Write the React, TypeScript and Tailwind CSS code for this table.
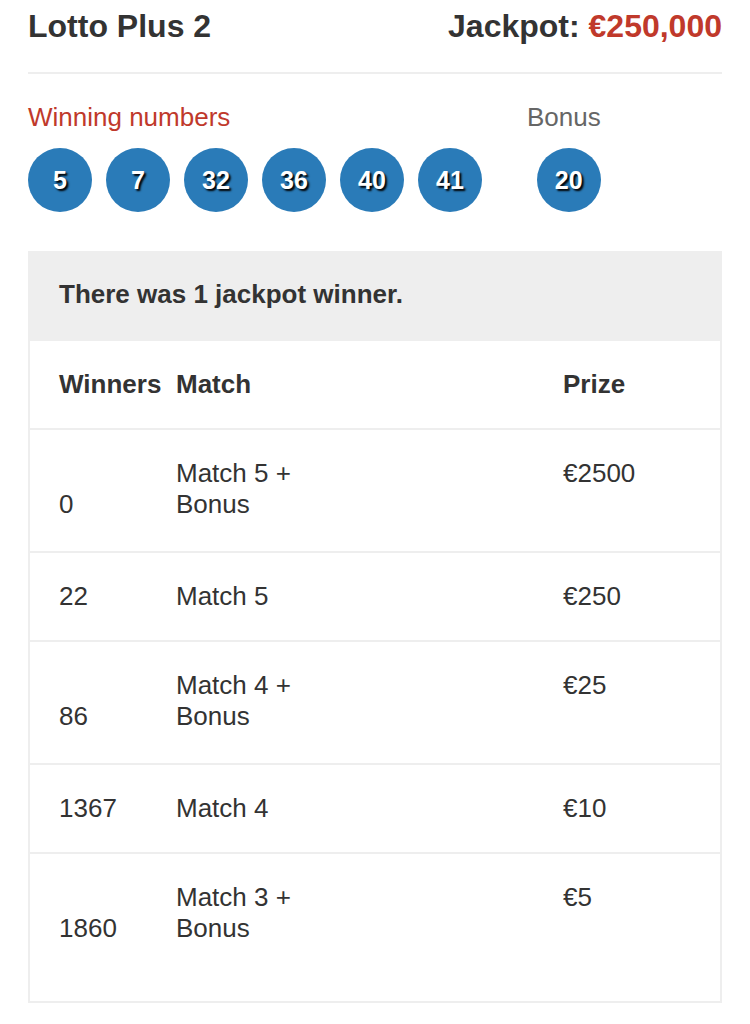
import React from 'react';

interface PrizeRow {
  winners: string;
  match: string[];
  prize: string;
}

const numbers = [5, 7, 32, 36, 40, 41];
const bonus = 20;

const rows: PrizeRow[] = [
  { winners: '0', match: ['Match 5 +', 'Bonus'], prize: '€2500' },
  { winners: '22', match: ['Match 5'], prize: '€250' },
  { winners: '86', match: ['Match 4 +', 'Bonus'], prize: '€25' },
  { winners: '1367', match: ['Match 4'], prize: '€10' },
  { winners: '1860', match: ['Match 3 +', 'Bonus'], prize: '€5' },
];

const Ball: React.FC<{ n: number }> = ({ n }) => (
  <div className="w-16 h-16 rounded-full bg-[#2a7bb8] flex items-center justify-center">
    <span className="text-white font-bold text-[25px] leading-none [text-shadow:2px_2px_2px_#000]">{n}</span>
  </div>
);

const App: React.FC = () => {
  return (
    <div className="bg-white min-h-[1024px] px-[28px] font-['Liberation_Sans',Arial,sans-serif] text-[#333]">
      {/* Header */}
      <div className="flex items-baseline justify-between pt-[6px] text-[32px] leading-10 font-bold">
        <h1>Lotto Plus 2</h1>
        <p>
          Jackpot: <span className="text-[#c0392b]">€250,000</span>
        </p>
      </div>
      <div className="mt-[26px] h-[2px] bg-[#eeeeee]" />

      {/* Draw numbers */}
      <div className="flex gap-[45px] pt-[28px] text-[26px] leading-[31px]">
        <div className="flex flex-col">
          <p className="text-[#c0392b]">Winning numbers</p>
          <div className="flex gap-[14px] mt-[15px]">
            {numbers.map((n) => (
              <Ball key={n} n={n} />
            ))}
          </div>
        </div>
        <div className="flex flex-col items-end">
          <p className="text-[#666]">Bonus</p>
          <div className="mt-[15px]">
            <Ball n={bonus} />
          </div>
        </div>
      </div>

      {/* Prize table */}
      <div className="mt-[39px] border-2 border-[#eeeeee] text-[26px] leading-[31px]">
        <div className="bg-[#eeeeee] pl-[29px] pt-[26px] pb-[31px] font-bold">There was 1 jackpot winner.</div>
        <div className="grid grid-cols-[117px_387px_1fr] pt-[28px] pb-[28px] font-bold border-b-2 border-[#eeeeee]">
          <div className="pl-[29px]">Winners</div>
          <div className="pl-[29px]">Match</div>
          <div className="pl-[29px]">Prize</div>
        </div>
        {rows.map((r, i) => {
          const last = i === rows.length - 1;
          const multi = r.match.length > 1;
          let cls = 'grid grid-cols-[117px_387px_1fr] pt-[28px]';
          if (last) cls += ' pb-[57px]';
          else if (multi) cls += ' pb-[31px] border-b-2 border-[#eeeeee]';
          else cls += ' pb-[28px] border-b-2 border-[#eeeeee]';
          return (
            <div key={r.winners} className={cls}>
              <div className="pl-[29px] self-end">{r.winners}</div>
              <div className="pl-[29px]">
                {r.match.map((m) => (
                  <div key={m}>{m}</div>
                ))}
              </div>
              <div className="pl-[29px] self-start">{r.prize}</div>
            </div>
          );
        })}
      </div>
    </div>
  );
};

export default App;
